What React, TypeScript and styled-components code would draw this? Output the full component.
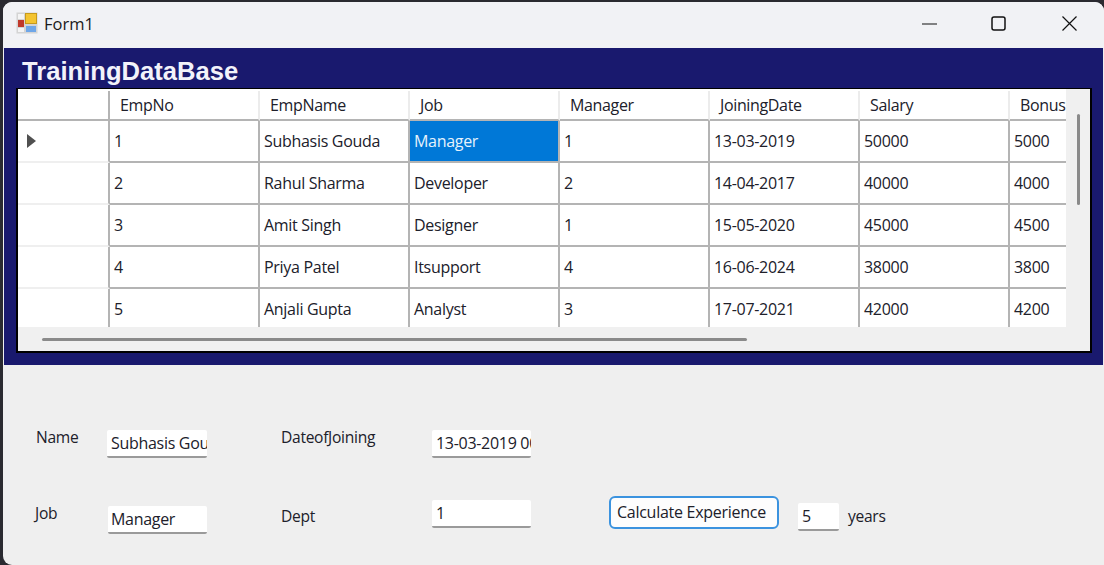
import React from "react";
import styled, { createGlobalStyle } from "styled-components";

const Global = createGlobalStyle`
  html, body { margin: 0; padding: 0; background: #2a2a30; }
  body { width: 1104px; height: 565px; overflow: hidden; font-family: "Open Sans", "Noto Sans", sans-serif; }
  * { box-sizing: border-box; }
`;

const Desktop = styled.div`
  width: 1104px;
  height: 565px;
  padding: 2px 0 0 3px;
  overflow: hidden;
`;

const Window = styled.div`
  width: 1101px;
  height: 563px;
  background: #efefef;
  border-radius: 9px 9px 0 9px;
  overflow: hidden;
  display: flex;
  flex-direction: column;
`;

const TitleBar = styled.div`
  height: 46px;
  flex: none;
  background: #f1f2f5;
  display: flex;
  align-items: center;
  padding: 0 0 4px 13px;
`;

const AppIcon = styled.svg`
  width: 22px;
  height: 22px;
  margin-right: 6px;
`;

const Title = styled.span`
  font-size: 16.5px;
  color: #1a1a1a;
  flex: 1;
`;

const WinButton = styled.div<{ $width: number }>`
  width: ${(p) => p.$width}px;
  height: 30px;
  display: flex;
  align-items: center;
  justify-content: center;
  svg { width: 15px; height: 15px; }
`;

const Banner = styled.section`
  height: 317px;
  flex: none;
  margin: 0 1px;
  background: #19196e;
  padding: 0 12px;
  display: flex;
  flex-direction: column;
`;

const Heading = styled.h1`
  margin: 0;
  height: 40px;
  padding: 8px 0 0 6px;
  font: bold 25.6px/30px "Liberation Sans", Arial, sans-serif;
  color: #f2f2fa;
`;

const GridFrame = styled.div`
  width: 1076px;
  height: 265px;
  background: #f0f0f0;
  border-style: solid;
  border-color: #000;
  border-width: 1px 2px 2px 2px;
  display: grid;
  grid-template-columns: 1048px 1fr;
  grid-template-rows: 238px 1fr;
`;

const Viewport = styled.div`
  overflow: hidden;
  background: #fff;
  padding-top: 2px;
`;

const Table = styled.div`
  display: grid;
  width: 1200px;
  grid-template-columns: 92px repeat(7, 150px);
  grid-template-rows: 30px repeat(5, 42px);
`;

const HeadCell = styled.div<{ $first?: boolean }>`
  background: #fff;
  border-right: 2px solid ${(p) => (p.$first ? "#b4b4b4" : "#ececec")};
  border-bottom: 2px solid #b4b4b4;
  font-size: 16px;
  line-height: 29px;
  padding-left: 10px;
  color: #20202a;
  letter-spacing: -0.35px;
  white-space: nowrap;
  overflow: hidden;
`;

const RowHead = styled.div`
  background: #fff;
  border-right: 2px solid #b4b4b4;
  border-bottom: 2px solid #efefef;
  display: flex;
  align-items: center;
  padding-left: 9px;
`;

const Arrow = styled.i`
  width: 0;
  height: 0;
  border-left: 9px solid #505050;
  border-top: 7px solid transparent;
  border-bottom: 7px solid transparent;
`;

const Cell = styled.div<{ $selected?: boolean }>`
  background: ${(p) => (p.$selected ? "#0078d7" : "#fff")};
  color: ${(p) => (p.$selected ? "#e6f2fc" : "#20202a")};
  border-right: 2px solid #b4b4b4;
  border-bottom: 2px solid #b4b4b4;
  font-size: 16px;
  line-height: 41px;
  padding-left: 4px;
  letter-spacing: -0.3px;
  white-space: nowrap;
  overflow: hidden;
`;

const VTrack = styled.div`
  background: #f0f0f0;
  padding: 25px 0 0 11px;
`;

const VThumb = styled.div`
  width: 3px;
  height: 91px;
  background: #8a8a8a;
  border-radius: 2px;
`;

const HTrack = styled.div`
  grid-column: 1 / 3;
  background: #f0f0f0;
  padding: 11px 0 0 24px;
`;

const HThumb = styled.div`
  width: 705px;
  height: 3px;
  background: #8a8a8a;
  border-radius: 2px;
`;

const FormGrid = styled.div`
  flex: 1;
  display: grid;
  grid-template-columns: 71px 174px 151px 177px 189px 50px 1fr;
  grid-template-rows: 93px 1fr;
  margin-left: 33px;
`;

const FieldLabel = styled.label<{ $top: number; $shift?: number }>`
  font-size: 15.6px;
  letter-spacing: -0.3px;
  color: #20202a;
  padding-top: ${(p) => p.$top}px;
  margin-left: ${(p) => p.$shift ?? 0}px;
  white-space: nowrap;
`;

const Input = styled.div<{ $top: number; $left?: number; $width: number }>`
  width: ${(p) => p.$width}px;
  height: 28px;
  margin-top: ${(p) => p.$top}px;
  margin-left: ${(p) => p.$left ?? 0}px;
  background: #fff;
  border-bottom: 2px solid #9a9a9a;
  border-radius: 2px;
  font-size: 16px;
  line-height: 27px;
  padding-left: ${(p) => 4 - (p.$left ?? 0)}px;
  color: #20202a;
  letter-spacing: -0.3px;
  white-space: nowrap;
  overflow: hidden;
`;

const CalcButton = styled.button<{ $top: number }>`
  width: 170px;
  height: 33px;
  margin-top: ${(p) => p.$top}px;
  background: #fdfdfd;
  border: 2px solid #3b93df;
  border-radius: 6px;
  font: 16px "Open Sans", sans-serif;
  letter-spacing: -0.27px;
  color: #20202a;
  padding: 0 5px 1px 0;
  white-space: nowrap;
`;

const EmptyCell = styled.div`
  grid-column: span 3;
`;

const columns = ["EmpNo", "EmpName", "Job", "Manager", "JoiningDate", "Salary", "Bonus"];
const rows = [
  ["1", "Subhasis Gouda", "Manager", "1", "13-03-2019", "50000", "5000"],
  ["2", "Rahul Sharma", "Developer", "2", "14-04-2017", "40000", "4000"],
  ["3", "Amit Singh", "Designer", "1", "15-05-2020", "45000", "4500"],
  ["4", "Priya Patel", "Itsupport", "4", "16-06-2024", "38000", "3800"],
  ["5", "Anjali Gupta", "Analyst", "3", "17-07-2021", "42000", "4200"],
];

export default function App() {
  return (
    <Desktop>
      <Global />
      <Window>
        <TitleBar>
          <AppIcon viewBox="0 0 22 22">
            <rect x="0.5" y="0.5" width="21" height="21" fill="#d4d4d4" />
            <rect x="2" y="2" width="6" height="5" fill="#f4f4f4" />
            <rect x="2" y="16" width="6" height="4" fill="#f4f4f4" />
            <rect x="2" y="8" width="6" height="7" fill="#c0392b" />
            <rect x="9.5" y="1.5" width="11" height="10" fill="#f4c430" stroke="#c79a1c" />
            <rect x="10" y="14" width="10" height="6" fill="#6ea6e8" />
          </AppIcon>
          <Title>Form1</Title>
          <WinButton $width={65}>
            <svg viewBox="0 0 15 15"><path d="M0 8h15" stroke="#111" strokeWidth="1.2" /></svg>
          </WinButton>
          <WinButton $width={73}>
            <svg viewBox="0 0 15 15"><rect x="1" y="1" width="13" height="13" rx="2" fill="none" stroke="#111" strokeWidth="1.5" /></svg>
          </WinButton>
          <WinButton $width={69}>
            <svg viewBox="0 0 15 15"><path d="M0.5 0.5l14 14M14.5 0.5l-14 14" stroke="#111" strokeWidth="1.2" /></svg>
          </WinButton>
        </TitleBar>
        <Banner>
          <Heading>TrainingDataBase</Heading>
          <GridFrame>
            <Viewport>
              <Table>
                <HeadCell $first />
                {columns.map((c) => (
                  <HeadCell key={c}>{c}</HeadCell>
                ))}
                {rows.map((r, i) => (
                  <React.Fragment key={r[0]}>
                    <RowHead>{i === 0 && <Arrow />}</RowHead>
                    {r.map((v, j) => (
                      <Cell key={j} $selected={i === 0 && j === 2}>{v}</Cell>
                    ))}
                  </React.Fragment>
                ))}
              </Table>
            </Viewport>
            <VTrack><VThumb /></VTrack>
            <HTrack><HThumb /></HTrack>
          </GridFrame>
        </Banner>
        <FormGrid>
          <FieldLabel $top={61}>Name</FieldLabel>
          <Input $top={65} $width={100}>Subhasis Gouda</Input>
          <FieldLabel $top={61}>DateofJoining</FieldLabel>
          <Input $top={65} $width={99}>13-03-2019 00:00:00</Input>
          <EmptyCell />
          <FieldLabel $top={44} $shift={-1}>Job</FieldLabel>
          <Input $top={48} $left={1} $width={99}>Manager</Input>
          <FieldLabel $top={47}>Dept</FieldLabel>
          <Input $top={42} $width={99}>1</Input>
          <CalcButton $top={38}>Calculate Experience</CalcButton>
          <Input $top={45} $width={41}>5</Input>
          <FieldLabel $top={47}>years</FieldLabel>
        </FormGrid>
      </Window>
    </Desktop>
  );
}
